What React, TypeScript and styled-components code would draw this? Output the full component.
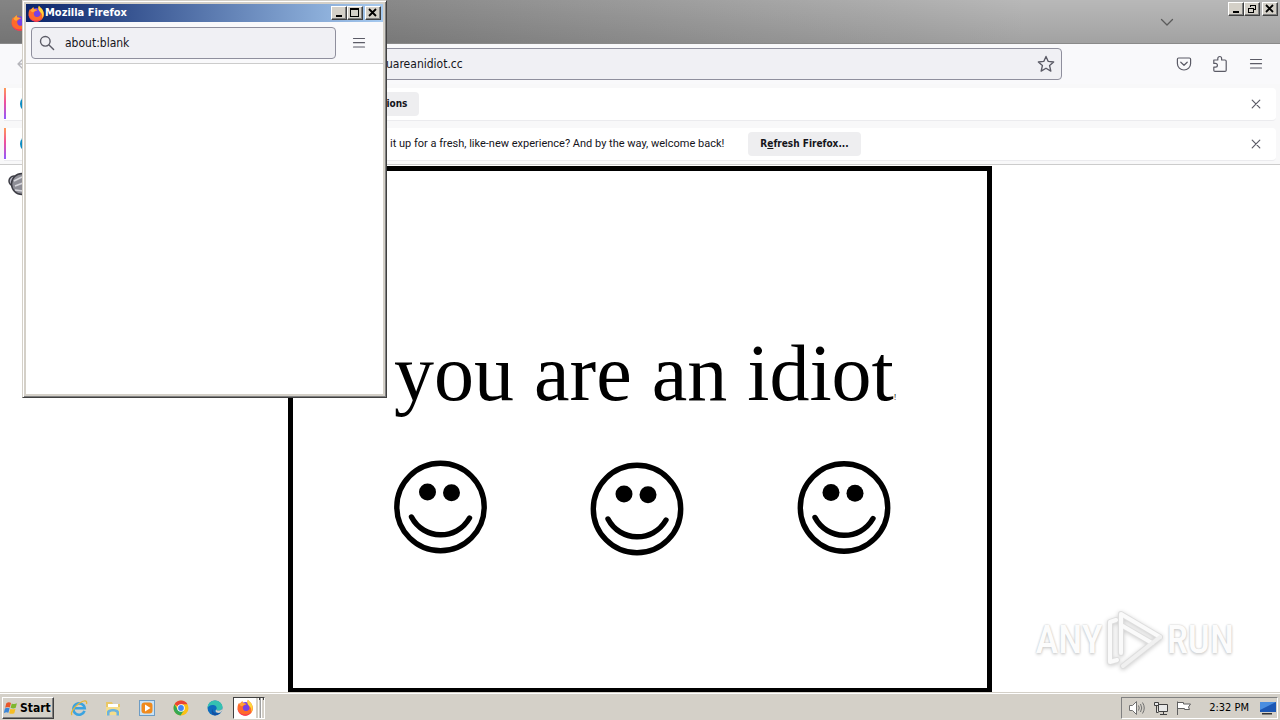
import React from "react";
import styled, { createGlobalStyle } from "styled-components";

const GlobalStyle = createGlobalStyle`
  * { box-sizing: border-box; }
  body { margin: 0; background: #fff; }
  button, input { font: inherit; color: inherit; margin: 0; }
  svg { display: block; flex: none; }
`;

const ui = `"DejaVu Sans Condensed", "DejaVu Sans", sans-serif`;
const face = "#d4d0c8";

const Desktop = styled.div`
  position: relative;
  display: flex;
  flex-direction: column;
  min-height: 100vh;
  font-family: ${ui};
  font-size: 11px;
  color: #15141a;
`;

/* ---------- shared window parts ---------- */

const Controls = styled.div`
  display: flex;
  margin-left: auto;
`;

const ControlButton = styled.button<{ $apart?: boolean }>`
  width: 16px;
  height: 14px;
  padding: 0;
  margin-left: ${(p) => (p.$apart ? 2 : 0)}px;
  display: grid;
  place-items: center;
  background: ${face};
  border: 1px solid;
  border-color: #fff #404040 #404040 #fff;
  box-shadow: inset -1px -1px 0 #808080;
`;

const IconButton = styled.button`
  width: 32px;
  height: 32px;
  padding: 0;
  border: 0;
  background: transparent;
  display: grid;
  place-items: center;
  color: #5b5b66;
`;

const AddressBox = styled.label`
  display: flex;
  align-items: center;
  flex: 1;
  min-width: 0;
  height: 32px;
  border: 1px solid #8f8f9d;
  border-radius: 4px;
  background: #f0f0f4;
  color: #5b5b66;
`;

const AddressInput = styled.input`
  flex: 1;
  min-width: 0;
  border: 0;
  padding: 0;
  outline: 0;
  background: transparent;
  font-size: 12px;
  line-height: 16px;
  color: #15141a;
`;

/* ---------- main browser window ---------- */

const Browser = styled.main`
  flex: 1;
  display: flex;
  flex-direction: column;
`;

const TabStrip = styled.header`
  display: flex;
  align-items: flex-start;
  height: 44px;
  padding: 2px 2px 0 11px;
  background:
    linear-gradient(rgba(0, 0, 0, 0), rgba(0, 0, 0, 0.12)),
    linear-gradient(to right, #848484 25%, #b8b8b8 80%);
  border-bottom: 1px solid #8a8a8a;
`;

const TabIcon = styled.div`
  padding-top: 11px;
`;

const TabListButton = styled(IconButton)`
  margin-left: auto;
  margin-right: 49px;
  margin-top: 8px;
  width: 24px;
  height: 24px;
`;

const TabControls = styled(Controls)`
  margin-left: 0;
`;

const NavBar = styled.nav`
  display: flex;
  align-items: center;
  height: 40px;
  padding: 0 8px;
  background: #f9f9fb;
`;

const NavAddress = styled(AddressBox)`
  margin-left: 170px;
  margin-right: 106px;
  padding: 0 6px 0 162px;
`;

const NavActions = styled.div`
  display: flex;
  gap: 4px;
`;

const Notices = styled.section`
  display: flex;
  flex-direction: column;
  gap: 8px;
  padding: 4px 4px 4px;
  background: #f8f8f9;
  border-bottom: 1px solid #ccc;
`;

const Notice = styled.div<{ $lead: number }>`
  position: relative;
  display: flex;
  align-items: center;
  height: 33px;
  margin-bottom: -1px;
  padding: 0 4px 0 ${(p) => p.$lead}px;
  background: #fff;
  border-bottom: 1px solid #ebebee;
  border-radius: 0 4px 4px 0;
  line-height: 16px;
`;

const Accent = styled.span`
  position: absolute;
  left: 0;
  top: 0;
  bottom: 1px;
  width: 2px;
  background: linear-gradient(#ff9a55, #f0509a 45%, #9059ff);
`;

const NoticeIcon = styled.span`
  position: absolute;
  left: 16px;
  top: 8px;
`;

const NoticeButton = styled.button`
  height: 24px;
  padding: 0 12px;
  border: 0;
  border-radius: 4px;
  background: #eeeef0;
  font-weight: 700;
  font-size: 10px;
  line-height: 24px;
`;

const NoticeText = styled.span`
  margin-right: 24px;
  font-family: Roboto, ${ui};
  white-space: nowrap;
`;

const NoticeClose = styled(IconButton)`
  margin-left: auto;
`;

/* ---------- page shown in the browser ---------- */

const Page = styled.article`
  flex: 1;
  display: grid;
  grid-template-columns: 1fr 55% 1fr;
  padding-top: 1px;
  background: #fff;
`;

const Speaker = styled.div`
  padding: 5px 8px;
`;

const Movie = styled.section`
  border: 5px solid #000;
  border-bottom-width: 4px;
  padding: 162px 0 0 101px;
  overflow: hidden;
`;

const Headline = styled.h1`
  margin: 0 0 47px;
  font: 400 80px/80px "Liberation Serif", "Times New Roman", serif;
  color: #000;
  white-space: nowrap;
`;

const Bang = styled.span`
  font-size: 8px;
  line-height: 8px;
`;

/* ---------- popup ---------- */

const Popup = styled.aside`
  position: absolute;
  left: 22px;
  top: 0;
  width: 365px;
  height: 398px;
  display: flex;
  flex-direction: column;
  background: #fff;
  border: 1px solid;
  border-color: ${face} #404040 #404040 ${face};
  box-shadow: inset 1px 1px 0 #fff, inset -1px -1px 0 #808080, inset 0 0 0 3px ${face};
  padding: 3px;
`;

const PopupTitle = styled.header`
  display: flex;
  align-items: center;
  height: 18px;
  padding: 0 2px;
  background: linear-gradient(to right, #0a246a, #a6caf0);
  color: #fff;
  font-weight: 700;
  line-height: 18px;
`;

const PopupBar = styled.div`
  display: flex;
  align-items: center;
  height: 42px;
  padding: 0 8px 0 5px;
  gap: 7px;
  background: #f9f9fb;
  border-bottom: 1px solid #ccc;
`;

const PopupAddress = styled(AddressBox)`
  padding: 0 7px;
  gap: 10px;
`;

/* ---------- watermark ---------- */

const Watermark = styled.div`
  position: absolute;
  right: 46px;
  bottom: 48px;
  display: flex;
  align-items: center;
  gap: 3px;
  font: 500 39px/64px "Roboto Condensed", Roboto, sans-serif;
  color: #fcfcfc;
  text-shadow: 0 0 2px #bbb, 0 2px 3px #ddd;
`;

const PlaySvg = styled.svg`
  filter: drop-shadow(0 1px 2px #ccc);
`;

/* ---------- taskbar ---------- */

const Taskbar = styled.footer`
  display: flex;
  align-items: center;
  height: 28px;
  padding: 2px 2px 0;
  background: ${face};
  border-top: 1px solid ${face};
  box-shadow: inset 0 1px 0 #fff;
`;

const StartButton = styled.button`
  display: flex;
  align-items: center;
  gap: 1px;
  width: 52px;
  height: 22px;
  padding: 0 1px;
  background: ${face};
  border: 1px solid;
  border-color: #fff #404040 #404040 #fff;
  box-shadow: inset -1px -1px 0 #808080;
  font-weight: 700;
  font-size: 12px;
  color: #000;
`;

const Launchers = styled.div`
  display: flex;
  gap: 2px;
  padding-left: 9px;
`;

const Launcher = styled(IconButton)`
  height: 22px;
`;

const RunningTask = styled.button`
  display: flex;
  align-items: center;
  gap: 3px;
  width: 32px;
  height: 22px;
  margin-left: 2px;
  padding: 0 0 0 3px;
  background: linear-gradient(to right, #fff 22px, ${face} 22px);
  border: 1px solid;
  border-color: #404040 #fff #fff #404040;
`;

const Tray = styled.div`
  display: flex;
  align-items: center;
  height: 22px;
  margin-left: auto;
  padding: 0 0 0 6px;
  gap: 7px;
  border: 1px solid;
  border-color: #808080 #fff #fff #808080;
  color: #000;
`;

const Clock = styled.time`
  padding: 0 3px 0 10px;
  white-space: nowrap;
`;

/* ---------- drawings ---------- */

const Firefox = ({ size = 16 }: { size?: number }) => (
  <svg width={size} height={size} viewBox="0 0 16 16">
    <circle cx="8" cy="8.8" r="6" fill="#7542e5" />
    <path d="M10.3.6c.6 1.4 2.6 2.4 3.5 4C16.800 9.500 13.800 15.700 8 15.700 3.700 15.700.5 12.500.5 8.500c0-2 .6-3.700 1.600-4.900.1.600.3 1 .5 1.200C3.300 3.500 4.300 2.300 5.200 2c-.1 1 .2 1.600.7 2.100 1 .1 2.200.2 3 .8-1.600.5-2.600 1.500-3.300 2.300C5 9.800 7 11.500 8.700 11.400c2.400-.1 3.600-2.100 2.800-4.100C11.300 5.400 8.700 3.900 10.300.6z" fill="#ff6a2b" />
    <path d="M10.300.6c.6 1.400 2.600 2.400 3.500 4 1.300 2.500 1.300 5.600-.3 7.800.2-2.800-.2-4.400-2-5.800C9.700 5.100 9.100 3 10.300.6z" fill="#ffd53a" />
    <path d="M.6 8c.2 4.200 3.200 6.600 6.800 6.700 2.400 0 4.400-1 5.600-2.500-.9 2.200-3 3.500-5.300 3.500C3.300 15.600.2 12.200.6 8z" fill="#f52f5d" />
    <path d="M2.100 3.700c.1.600.3.900.5 1.100C3.300 3.500 4.200 2.500 5.200 2c-.1 1 .1 1.600.7 2.100 1 .1 2.100.2 3 .8-2.200.2-3 1.200-4.200 2C3.400 6.500 2 5.700 2.100 3.700z" fill="#ffa436" />
  </svg>
);

const Menu = () => (
  <svg width="16" height="16" viewBox="0 0 16 16" stroke="currentColor" strokeWidth="1.200" strokeLinecap="round">
    <path d="M2.500 3.500h11M2.500 7.700h11M2.500 12h11" />
  </svg>
);

const Cross = () => (
  <svg width="16" height="16" viewBox="0 0 16 16" stroke="currentColor" strokeWidth="1.200" strokeLinecap="round">
    <path d="M4.200 4.200l7.600 7.600M11.800 4.200l-7.600 7.600" />
  </svg>
);

const WindowGlyph = ({ kind }: { kind: "min" | "max" | "restore" | "close" }) => (
  <svg width="12" height="10" viewBox="0 0 12 10" fill="none" stroke="#000" shapeRendering="crispEdges">
    {kind === "min" && <path d="M3 8h6" strokeWidth="2" />}
    {kind === "max" && <path d="M1.500 1v7.500h8V1" />}
    {kind === "max" && <path d="M1 1h9" strokeWidth="2" />}
    {kind === "restore" && <path d="M4.500 3V1.500h5v4H8M4 1h6M2.500 4v4.500h5V4M2 4h6" />}
    {kind === "close" && <path d="M2 1l7 7M9 1L2 8" strokeWidth="1.800" shapeRendering="auto" />}
  </svg>
);

const Info = () => (
  <svg width="16" height="16" viewBox="0 0 16 16">
    <circle cx="8" cy="8" r="8" fill="#0c8dc4" />
    <path d="M8 7v5M8 4v1" stroke="#fff" strokeWidth="2" />
  </svg>
);

const Smiley = ({ x, y }: { x: number; y: number }) => (
  <g transform={`translate(${x} ${y})`}>
    <circle r="43.700" fill="none" stroke="#000" strokeWidth="5.400" />
    <circle cx="-13" cy="-15" r="8.500" />
    <circle cx="11" cy="-14.300" r="8.500" />
    <path d="M-29 10C-17 33 16 34 29 11" fill="none" stroke="#000" strokeWidth="5.400" strokeLinecap="round" />
  </g>
);

const PlayMark = () => (
  <PlaySvg width="58" height="64" viewBox="0 0 58 64" fill="none" strokeLinejoin="round" strokeLinecap="round">
    <g stroke="#dedede" strokeWidth="6">
      <path d="M15 45V6L54 29L17 58" />
      <path d="M10 12L4 14V54L11 52M15 17L46 35" />
    </g>
    <g stroke="#fafafa" strokeWidth="4">
      <path d="M15 45V6L54 29" />
      <path d="M10 12L4 14V54L11 52M15 17L46 35" />
    </g>
    <path d="M54 29L17 58" stroke="#f0f0f0" strokeWidth="4" />
  </PlaySvg>
);

export default function App() {
  return (
    <Desktop>
      <GlobalStyle />
      <Browser>
        <TabStrip>
          <TabIcon><Firefox size={18} /></TabIcon>
          <TabListButton aria-label="List all tabs">
            <svg width="14" height="14" viewBox="0 0 14 14" fill="none" stroke="#5b5b5b" strokeWidth="1.300" strokeLinecap="round" strokeLinejoin="round"><path d="M1.500 4.500L7 10l5.500-5.500" /></svg>
          </TabListButton>
          <TabControls>
            <ControlButton aria-label="Minimize"><WindowGlyph kind="min" /></ControlButton>
            <ControlButton aria-label="Restore"><WindowGlyph kind="restore" /></ControlButton>
            <ControlButton $apart aria-label="Close"><WindowGlyph kind="close" /></ControlButton>
          </TabControls>
        </TabStrip>

        <NavBar>
          <IconButton aria-label="Back">
            <svg width="16" height="16" viewBox="0 0 16 16" fill="none" stroke="#b5b5ba" strokeWidth="1.300" strokeLinecap="round" strokeLinejoin="round"><path d="M14 8H2M7 3L2 8l5 5" /></svg>
          </IconButton>
          <NavAddress>
            <AddressInput aria-label="Address" defaultValue="youareanidiot.cc" />
            <svg width="18" height="18" viewBox="0 0 16 16" fill="none" stroke="currentColor" strokeWidth="1.200" strokeLinejoin="round"><path d="M8 1.300l2 4.400 4.800.5-3.600 3.200 1.100 4.900L8 11.800l-4.300 2.500 1.100-4.900L1.200 6.200 6 5.700z" /></svg>
          </NavAddress>
          <NavActions>
            <IconButton aria-label="Save to Pocket">
              <svg width="16" height="16" viewBox="0 0 16 16" fill="none" stroke="currentColor" strokeWidth="1.200" strokeLinecap="round" strokeLinejoin="round"><path d="M2.600 2h10.800c.7 0 1.200.5 1.200 1.200v4.200a6.600 6.600 0 0 1-13.200 0V3.200C1.400 2.500 1.900 2 2.600 2zM4.800 6.200L8 9.300l3.200-3.100" /></svg>
            </IconButton>
            <IconButton aria-label="Extensions">
              <svg width="16" height="18" viewBox="0 0 16 18" fill="none" stroke="currentColor" strokeWidth="1.200" strokeLinejoin="round"><path d="M1.800 5h4V3.400a1.900 1.900 0 0 1 3.800 0V5H13c.7 0 1.200.5 1.200 1.200v9c0 .7-.5 1.200-1.200 1.200H3c-.7 0-1.200-.5-1.200-1.200v-3h1.700a1.900 1.900 0 0 0 0-3.800H1.800z" /></svg>
            </IconButton>
            <IconButton aria-label="Menu"><Menu /></IconButton>
          </NavActions>
        </NavBar>

        <Notices>
          <Notice $lead={352}>
            <Accent />
            <NoticeIcon><Info /></NoticeIcon>
            <NoticeButton>Options</NoticeButton>
            <NoticeClose aria-label="Dismiss"><Cross /></NoticeClose>
          </Notice>
          <Notice $lead={386}>
            <Accent />
            <NoticeIcon><Info /></NoticeIcon>
            <NoticeText>it up for a fresh, like-new experience? And by the way, welcome back!</NoticeText>
            <NoticeButton>R<u>e</u>fresh Firefox...</NoticeButton>
            <NoticeClose aria-label="Dismiss"><Cross /></NoticeClose>
          </Notice>
        </Notices>

        <Page>
          <Speaker>
            <svg width="28" height="26" viewBox="0 0 28 26">
              <circle cx="6" cy="10" r="5" fill="#b9b9c4" stroke="#3c3c44" strokeWidth="1.500" />
              <circle cx="14" cy="13" r="10.500" fill="#8e8e96" stroke="#3c3c44" strokeWidth="1.500" />
              <path d="M6 10l8-4M7 15l8-3M7 19l8 1" stroke="#d8d8dd" strokeWidth="1.500" />
            </svg>
          </Speaker>
          <Movie>
            <Headline>you are an idiot<Bang>!</Bang></Headline>
            <svg width="498" height="96" viewBox="0 0 498 96">
              <Smiley x={46.500} y={47} />
              <Smiley x={243} y={49} />
              <Smiley x={450} y={47.500} />
            </svg>
          </Movie>
        </Page>
      </Browser>

      <Watermark>
        <span>ANY</span>
        <PlayMark />
        <span>RUN</span>
      </Watermark>

      <Taskbar>
        <StartButton>
          <svg width="15" height="15" viewBox="0 0 16 16">
            <path d="M2.500 3.500c2-1.500 3.500-1.200 5-.3L6.200 8C4.500 7 3 7.200 1.200 8.200z" fill="#e8562a" />
            <path d="M8.300 3.600c1.800 1 3.500 1 5.500-.1L12.500 8.300c-1.800 1-3.600 1-5.500 0z" fill="#7db72f" />
            <path d="M1 9c1.800-1 3.300-1 5-.1l-1.300 4.800C3 12.800 1.800 13-.2 13.900z" fill="#3a86d8" />
            <path d="M6.800 9.200c1.800 1 3.600 1 5.500.1L11 14c-1.900 1-3.600 1-5.500 0z" fill="#f6bd23" />
          </svg>
          Start
        </StartButton>
        <Launchers>
          <Launcher aria-label="Internet Explorer">
            <svg width="18" height="18" viewBox="0 0 18 18" fill="none">
              <path d="M14.500 11.800A5.700 5.700 0 1 1 14.700 9.200H5" stroke="#3ba3e0" strokeWidth="2.600" />
              <path d="M2 16c-2-2 2-8 7-11.500S17.500 1 16.500 5" stroke="#e5b63a" strokeWidth="1.300" />
            </svg>
          </Launcher>
          <Launcher aria-label="File Explorer">
            <svg width="18" height="18" viewBox="0 0 18 18">
              <path d="M2 3h6l1 2h7v11H2z" fill="#e9c766" />
              <path d="M4 5h10v4H4z" fill="#fff" />
              <path d="M2 8h14v8H2z" fill="#f5dd8c" />
              <path d="M3 16.500v-3.500c0-4 12-4 12 0v3.500h-2.500v-2.500c0-2-7-2-7 0v2.500z" fill="#6bb2de" />
            </svg>
          </Launcher>
          <Launcher aria-label="Media Player">
            <svg width="18" height="18" viewBox="0 0 18 18">
              <rect x="1.500" y="1.500" width="15" height="15" fill="#c8e2f6" stroke="#6d9cc4" />
              <rect x="3.500" y="3.500" width="11" height="11" rx="3" fill="#f08a1c" />
              <path d="M7 5.500v7L12.500 9z" fill="#fff" />
            </svg>
          </Launcher>
          <Launcher aria-label="Chrome">
            <svg width="18" height="18" viewBox="0 0 18 18">
              <circle cx="9" cy="9" r="7.500" fill="#fbc116" />
              <path d="M9 9L2.500 5.300A7.500 7.500 0 0 1 15.500 5.300H9z" fill="#ea4335" />
              <path d="M2.500 5.300A7.500 7.500 0 0 0 8.500 16.500L12.200 10.900 6 11z" fill="#34a853" />
              <circle cx="9" cy="9" r="3.800" fill="#fff" />
              <circle cx="9" cy="9" r="2.900" fill="#4285f4" />
            </svg>
          </Launcher>
          <Launcher aria-label="Edge">
            <svg width="18" height="18" viewBox="0 0 18 18">
              <circle cx="9" cy="9" r="7.500" fill="#0f6cbd" />
              <path d="M1.500 9C1.500 4.500 5 1.500 9 1.500S16.500 4.500 16.500 8c0 2.500-2 3.600-4 3.600-1.600 0-2.500-.5-2-1.400C11.500 7.500 9 6 6.500 6S2 7.500 1.500 9z" fill="#35c1b1" />
              <path d="M6.500 10c-.3 3.500 3 5.500 7.500 3.800A7.500 7.500 0 0 1 9 16.500C5.500 15.500 5 12 6.500 10z" fill="#154fa0" />
              <path d="M10.500 10.200c-.5.900.4 1.400 2 1.400 1.700 0 3.500-.8 3.900-2.400.3 1.900-.8 3.900-2.400 4.600-4 .7-5.500-1.800-3.500-3.600z" fill="#d4d0c8" />
            </svg>
          </Launcher>
        </Launchers>
        <RunningTask aria-label="Firefox">
          <Firefox size={17} />
          <svg width="7" height="20" viewBox="0 0 7 20" shapeRendering="crispEdges">
            <path d="M1.500 0v20M4.500 0v20" stroke="#fff" />
            <path d="M2.500 0v2M6.500 0v2" stroke="#404040" />
            <path d="M3.500 0v20" stroke="#a0a0a0" />
          </svg>
        </RunningTask>
        <Tray>
          <svg width="18" height="16" viewBox="0 0 18 16" fill="none" stroke="#707070">
            <path d="M1.500 5.500h3l4-4v13l-4-4h-3z" fill="#fff" />
            <path d="M10.500 5.500q1.500 2.500 0 5M12.500 4q2.500 4 0 8M14.500 2.500q3.500 5.500 0 11" />
          </svg>
          <svg width="16" height="16" viewBox="0 0 16 16" fill="#e8e8e8" stroke="#404040">
            <path d="M5.500 4.500h9v7h-9zM7 14.500h7M10.500 12v2M1.500 2.500h4v3h-4zM3.500 6v6.500h2" />
          </svg>
          <svg width="16" height="16" viewBox="0 0 16 16" fill="#fff" stroke="#606060">
            <path d="M1.500 15V1.500M1.500 2.500h6v1.500h7l-2 3 1 2.500h-5V8.500h-7" />
          </svg>
          <Clock>2:32 PM</Clock>
          <svg width="18" height="16" viewBox="0 0 18 16">
            <path d="M1 2h16v10H1z" fill="#1d58b4" />
            <path d="M1 2h16L1 10z" fill="#4a8ee0" />
            <path d="M3 13h10v1.500H3z" fill="#333" />
          </svg>
        </Tray>
      </Taskbar>

      <Popup>
        <PopupTitle>
          <Firefox size={17} />
          Mozilla Firefox
          <Controls>
            <ControlButton aria-label="Minimize"><WindowGlyph kind="min" /></ControlButton>
            <ControlButton aria-label="Maximize"><WindowGlyph kind="max" /></ControlButton>
            <ControlButton $apart aria-label="Close"><WindowGlyph kind="close" /></ControlButton>
          </Controls>
        </PopupTitle>
        <PopupBar>
          <PopupAddress>
            <svg width="16" height="16" viewBox="0 0 16 16" fill="none" stroke="currentColor" strokeWidth="1.400" strokeLinecap="round"><circle cx="6.300" cy="6.300" r="4.800" /><path d="M10 10l4.600 4.600" /></svg>
            <AddressInput aria-label="Popup address" defaultValue="about:blank" />
          </PopupAddress>
          <IconButton aria-label="Menu"><Menu /></IconButton>
        </PopupBar>
      </Popup>
    </Desktop>
  );
}
